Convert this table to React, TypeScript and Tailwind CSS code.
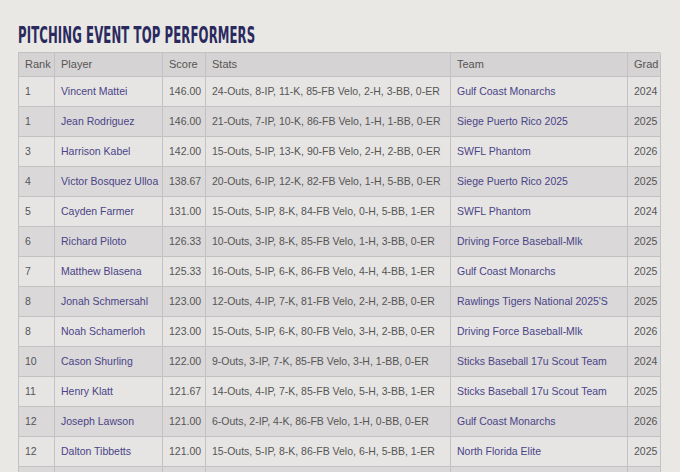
import React from "react";

type Row = { rank: string; player: string; score: string; stats: string; team: string; grad: string };

const rows: Row[] = [
  { rank: "1", player: "Vincent Mattei", score: "146.00", stats: "24-Outs, 8-IP, 11-K, 85-FB Velo, 2-H, 3-BB, 0-ER", team: "Gulf Coast Monarchs", grad: "2024" },
  { rank: "1", player: "Jean Rodriguez", score: "146.00", stats: "21-Outs, 7-IP, 10-K, 86-FB Velo, 1-H, 1-BB, 0-ER", team: "Siege Puerto Rico 2025", grad: "2025" },
  { rank: "3", player: "Harrison Kabel", score: "142.00", stats: "15-Outs, 5-IP, 13-K, 90-FB Velo, 2-H, 2-BB, 0-ER", team: "SWFL Phantom", grad: "2026" },
  { rank: "4", player: "Victor Bosquez Ulloa", score: "138.67", stats: "20-Outs, 6-IP, 12-K, 82-FB Velo, 1-H, 5-BB, 0-ER", team: "Siege Puerto Rico 2025", grad: "2025" },
  { rank: "5", player: "Cayden Farmer", score: "131.00", stats: "15-Outs, 5-IP, 8-K, 84-FB Velo, 0-H, 5-BB, 1-ER", team: "SWFL Phantom", grad: "2024" },
  { rank: "6", player: "Richard Piloto", score: "126.33", stats: "10-Outs, 3-IP, 8-K, 85-FB Velo, 1-H, 3-BB, 0-ER", team: "Driving Force Baseball-Mlk", grad: "2025" },
  { rank: "7", player: "Matthew Blasena", score: "125.33", stats: "16-Outs, 5-IP, 6-K, 86-FB Velo, 4-H, 4-BB, 1-ER", team: "Gulf Coast Monarchs", grad: "2025" },
  { rank: "8", player: "Jonah Schmersahl", score: "123.00", stats: "12-Outs, 4-IP, 7-K, 81-FB Velo, 2-H, 2-BB, 0-ER", team: "Rawlings Tigers National 2025'S", grad: "2025" },
  { rank: "8", player: "Noah Schamerloh", score: "123.00", stats: "15-Outs, 5-IP, 6-K, 80-FB Velo, 3-H, 2-BB, 0-ER", team: "Driving Force Baseball-Mlk", grad: "2026" },
  { rank: "10", player: "Cason Shurling", score: "122.00", stats: "9-Outs, 3-IP, 7-K, 85-FB Velo, 3-H, 1-BB, 0-ER", team: "Sticks Baseball 17u Scout Team", grad: "2024" },
  { rank: "11", player: "Henry Klatt", score: "121.67", stats: "14-Outs, 4-IP, 7-K, 85-FB Velo, 5-H, 3-BB, 1-ER", team: "Sticks Baseball 17u Scout Team", grad: "2025" },
  { rank: "12", player: "Joseph Lawson", score: "121.00", stats: "6-Outs, 2-IP, 4-K, 86-FB Velo, 1-H, 0-BB, 0-ER", team: "Gulf Coast Monarchs", grad: "2026" },
  { rank: "12", player: "Dalton Tibbetts", score: "121.00", stats: "15-Outs, 5-IP, 8-K, 86-FB Velo, 6-H, 5-BB, 1-ER", team: "North Florida Elite", grad: "2025" },
  { rank: "", player: "", score: "", stats: "", team: "", grad: "" },
];

const cols = "grid grid-cols-[36px_108px_43px_245px_177px_33px]";
const cell = "border-r border-b border-[#c3c1c1] px-[6px] flex items-center whitespace-nowrap overflow-hidden";

export default function App() {
  return (
    <div
      className="w-[680px] h-[472px] overflow-hidden bg-[#e9e8e5] pl-[18px]"
      style={{ fontFamily: '"Liberation Sans", Arial, sans-serif' }}
    >
      <div className="h-[52px] flex items-end pb-[5px]">
        <h1
          className="inline-block origin-left scale-x-[0.565] text-[23px] leading-none font-bold text-[#2b2a5e] tracking-[0.2px] whitespace-nowrap"
          style={{ fontFamily: '"DejaVu Sans Condensed", "DejaVu Sans", sans-serif' }}
        >
          PITCHING EVENT TOP PERFORMERS
        </h1>
      </div>
      <div className="w-[642px] border-l border-t border-[#c3c1c1] text-[10.5px] text-[#555]">
        <div className={`${cols} h-[24px] bg-[#d5d3d3] text-[11px]`}>
          <div className={cell}>Rank</div>
          <div className={cell}>Player</div>
          <div className={cell}>Score</div>
          <div className={cell}>Stats</div>
          <div className={cell}>Team</div>
          <div className={cell}>Grad</div>
        </div>
        {rows.map((r, i) => (
          <div
            key={i}
            className={`${cols} h-[30px] ${i % 2 === 0 ? "bg-[#e6e5e3]" : "bg-[#dad8d8]"}`}
          >
            <div className={cell}>{r.rank}</div>
            <div className={`${cell} text-[#4a4488]`}>{r.player}</div>
            <div className={cell}>{r.score}</div>
            <div className={cell}>{r.stats}</div>
            <div className={`${cell} text-[#4a4488]`}>{r.team}</div>
            <div className={cell}>{r.grad}</div>
          </div>
        ))}
      </div>
    </div>
  );
}
